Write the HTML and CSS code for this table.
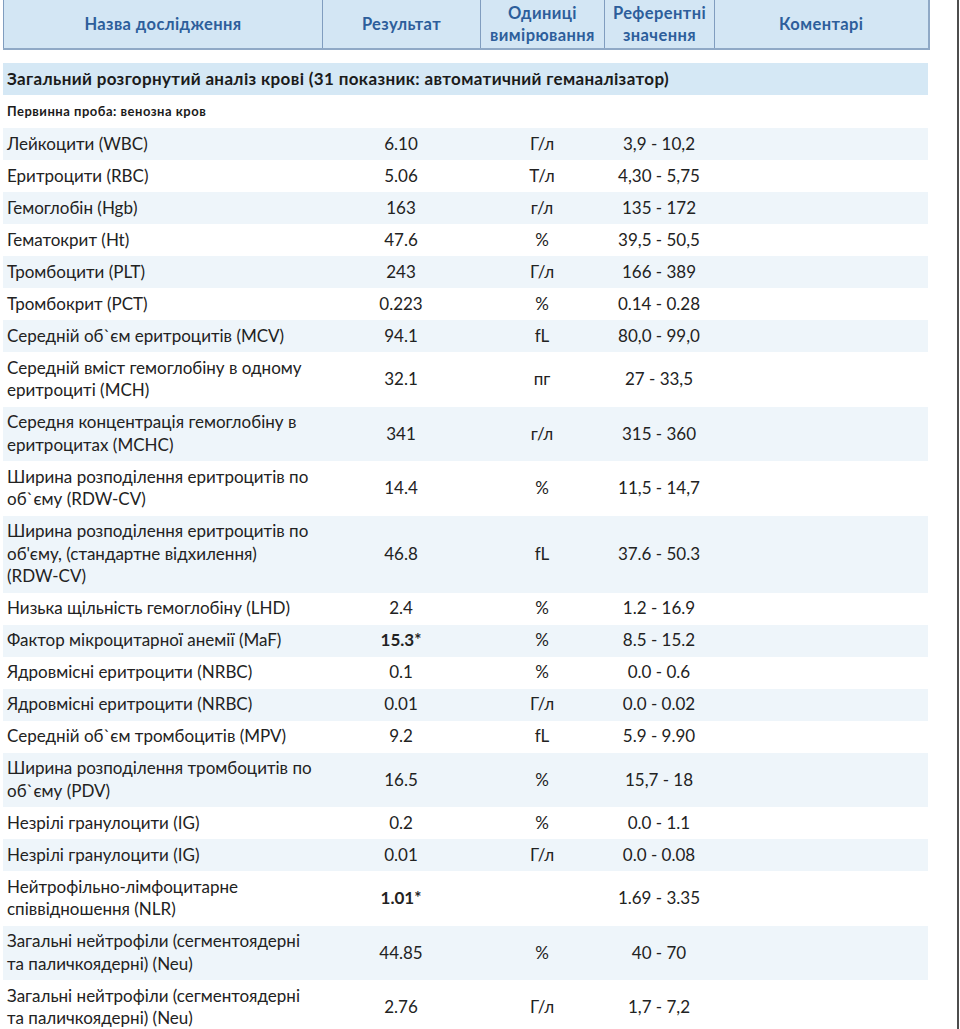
FILE: index.html
```html
<!DOCTYPE html>
<html lang="uk">
<head>
<meta charset="utf-8">
<title>Загальний розгорнутий аналіз крові</title>
<link rel="stylesheet" href="styles.css">
</head>
<body>
<div class="page">
  <table class="report">
    <colgroup>
      <col class="c-name"><col class="c-res"><col class="c-unit"><col class="c-ref"><col class="c-com">
    </colgroup>
    <thead>
      <tr class="head">
        <th>Назва дослідження</th>
        <th>Результат</th>
        <th>Одиниці<br>вимірювання</th>
        <th>Референтні<br>значення</th>
        <th>Коментарі</th>
      </tr>
    </thead>
  </table>
  <div class="section">Загальний розгорнутий аналіз крові (31 показник: автоматичний геманалізатор)</div>
  <div class="sample">Первинна проба: венозна кров</div>
  <table class="report rows">
    <colgroup>
      <col class="c-name"><col class="c-res"><col class="c-unit"><col class="c-ref"><col class="c-com">
    </colgroup>
    <tbody>
      <tr><td>Лейкоцити (WBC)</td><td>6.10</td><td>Г/л</td><td>3,9 - 10,2</td><td></td></tr>
      <tr><td>Еритроцити (RBC)</td><td>5.06</td><td>Т/л</td><td>4,30 - 5,75</td><td></td></tr>
      <tr><td>Гемоглобін (Hgb)</td><td>163</td><td>г/л</td><td>135 - 172</td><td></td></tr>
      <tr><td>Гематокрит (Ht)</td><td>47.6</td><td>%</td><td>39,5 - 50,5</td><td></td></tr>
      <tr><td>Тромбоцити (PLT)</td><td>243</td><td>Г/л</td><td>166 - 389</td><td></td></tr>
      <tr><td>Тромбокрит (PCT)</td><td>0.223</td><td>%</td><td>0.14 - 0.28</td><td></td></tr>
      <tr><td>Середній об`єм еритроцитів (MCV)</td><td>94.1</td><td>fL</td><td>80,0 - 99,0</td><td></td></tr>
      <tr><td>Середній вміст гемоглобіну в одному еритроциті (MCH)</td><td>32.1</td><td>пг</td><td>27 - 33,5</td><td></td></tr>
      <tr><td>Середня концентрація гемоглобіну в еритроцитах (MCHC)</td><td>341</td><td>г/л</td><td>315 - 360</td><td></td></tr>
      <tr><td>Ширина розподілення еритроцитів по об`єму (RDW-CV)</td><td>14.4</td><td>%</td><td>11,5 - 14,7</td><td></td></tr>
      <tr><td>Ширина розподілення еритроцитів по об'єму, (стандартне відхилення) <span class="nowrap">(RDW-CV)</span></td><td>46.8</td><td>fL</td><td>37.6 - 50.3</td><td></td></tr>
      <tr><td>Низька щільність гемоглобіну (LHD)</td><td>2.4</td><td>%</td><td>1.2 - 16.9</td><td></td></tr>
      <tr><td>Фактор мікроцитарної анемії (MaF)</td><td class="flag">15.3*</td><td>%</td><td>8.5 - 15.2</td><td></td></tr>
      <tr><td>Ядровмісні еритроцити (NRBC)</td><td>0.1</td><td>%</td><td>0.0 - 0.6</td><td></td></tr>
      <tr><td>Ядровмісні еритроцити (NRBC)</td><td>0.01</td><td>Г/л</td><td>0.0 - 0.02</td><td></td></tr>
      <tr><td>Середній об`єм тромбоцитів (MPV)</td><td>9.2</td><td>fL</td><td>5.9 - 9.90</td><td></td></tr>
      <tr><td>Ширина розподілення тромбоцитів по об`єму (PDV)</td><td>16.5</td><td>%</td><td>15,7 - 18</td><td></td></tr>
      <tr><td>Незрілі гранулоцити (IG)</td><td>0.2</td><td>%</td><td>0.0 - 1.1</td><td></td></tr>
      <tr><td>Незрілі гранулоцити (IG)</td><td>0.01</td><td>Г/л</td><td>0.0 - 0.08</td><td></td></tr>
      <tr><td>Нейтрофільно-лімфоцитарне співвідношення (NLR)</td><td class="flag">1.01*</td><td></td><td>1.69 - 3.35</td><td></td></tr>
      <tr><td>Загальні нейтрофіли (сегментоядерні та паличкоядерні) (Neu)</td><td>44.85</td><td>%</td><td>40 - 70</td><td></td></tr>
      <tr><td>Загальні нейтрофіли (сегментоядерні та паличкоядерні) (Neu)</td><td>2.76</td><td>Г/л</td><td>1,7 - 7,2</td><td></td></tr>
    </tbody>
  </table>
</div>
</body>
</html>
```
FILE: styles.css
```css
html, body {
  margin: 0;
  padding: 0;
  background: #ffffff;
}
body {
  font-family: Lato, "Open Sans", "Noto Sans", sans-serif;
  color: #1f1f1f;
}
.page {
  width: 959px;
  min-height: 1029px;
  border-right: 2px solid #4d4d4d;
  padding-left: 3px;
  box-sizing: border-box;
  overflow: hidden;
}
.report {
  width: 925px;
  border-collapse: collapse;
  table-layout: fixed;
}
.c-name { width: 319px; }
.c-res { width: 158px; }
.c-unit { width: 124px; }
.c-ref { width: 110px; }
.c-com { width: 214px; }

.head th {
  height: 48px;
  padding: 0 1px;
  background: #d3e6f4;
  border-left: 1px solid #809dbf;
  border-right: 1px solid #809dbf;
  border-bottom: 2px solid #8fa9c6;
  color: #2d5e9b;
  font-size: 16.5px;
  font-weight: 700;
  letter-spacing: 0.4px;
  line-height: 22px;
  text-align: center;
  vertical-align: middle;
}
.head th:last-child {
  border-right: 2px solid #8fa9c6;
}

.section {
  width: 925px;
  box-sizing: border-box;
  margin-top: 13px;
  height: 32px;
  padding: 0 4px;
  background: #d5e8f5;
  font-size: 17px;
  font-weight: 700;
  letter-spacing: 0.35px;
  line-height: 32px;
  color: #1b1b1b;
  white-space: nowrap;
}
.sample {
  height: 33px;
  padding: 0 4px;
  font-size: 13px;
  font-weight: 700;
  letter-spacing: 0.5px;
  line-height: 33px;
  color: #1b1b1b;
}

.rows td {
  padding: 4.75px 4px;
  font-size: 17px;
  line-height: 22.5px;
  text-align: center;
  vertical-align: middle;
  color: #222222;
}
.rows td:first-child {
  text-align: left;
}
.rows tr:nth-child(odd) td {
  background: #eef5fa;
}
.rows td.flag {
  font-weight: 700;
}
.nowrap {
  white-space: nowrap;
}
```
